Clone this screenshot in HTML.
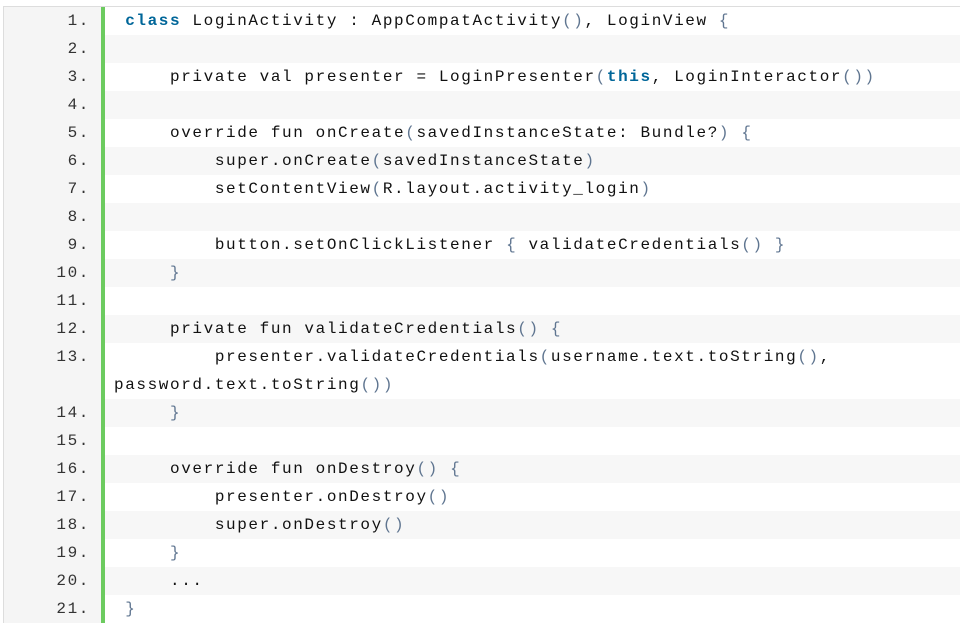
<!DOCTYPE html>
<html><head><style>
html,body{margin:0;padding:0;background:#fff;width:960px;height:623px;overflow:hidden}
.wrap{position:absolute;left:3px;top:6px;width:957px;border-top:1px solid #ddd;border-left:1px solid #ddd;background:#f5f5f5}
.row{position:relative;height:28px;font-family:"Liberation Mono","Courier New",monospace;font-size:16px;letter-spacing:1.6px;line-height:28px;color:#111;white-space:pre}
.row.tall{height:56px}
.num{position:absolute;left:0;width:86px;text-align:right;color:#333;background:#f5f5f5;height:100%}
.code{position:absolute;left:97px;right:0;height:100%;border-left:4px solid #6ccb5f;padding-left:9px;background:#fff}
.row:nth-child(even) .code{background:#f7f7f7}
.k{color:#069;font-weight:bold}
.p{color:#5f7590}
</style></head><body><div class="wrap">
<div class="row"><div class="num">1.</div><div class="code"> <span class="k">class</span> LoginActivity : AppCompatActivity<span class="p">()</span>, LoginView <span class="p">{</span></div></div>
<div class="row"><div class="num">2.</div><div class="code"></div></div>
<div class="row"><div class="num">3.</div><div class="code">     private val presenter = LoginPresenter<span class="p">(</span><span class="k">this</span>, LoginInteractor<span class="p">())</span></div></div>
<div class="row"><div class="num">4.</div><div class="code"></div></div>
<div class="row"><div class="num">5.</div><div class="code">     override fun onCreate<span class="p">(</span>savedInstanceState: Bundle?<span class="p">)</span> <span class="p">{</span></div></div>
<div class="row"><div class="num">6.</div><div class="code">         super.onCreate<span class="p">(</span>savedInstanceState<span class="p">)</span></div></div>
<div class="row"><div class="num">7.</div><div class="code">         setContentView<span class="p">(</span>R.layout.activity_login<span class="p">)</span></div></div>
<div class="row"><div class="num">8.</div><div class="code"></div></div>
<div class="row"><div class="num">9.</div><div class="code">         button.setOnClickListener <span class="p">{</span> validateCredentials<span class="p">()</span> <span class="p">}</span></div></div>
<div class="row"><div class="num">10.</div><div class="code">     <span class="p">}</span></div></div>
<div class="row"><div class="num">11.</div><div class="code"></div></div>
<div class="row"><div class="num">12.</div><div class="code">     private fun validateCredentials<span class="p">()</span> <span class="p">{</span></div></div>
<div class="row tall"><div class="num">13.</div><div class="code">         presenter.validateCredentials<span class="p">(</span>username.text.toString<span class="p">()</span>,
password.text.toString<span class="p">())</span></div></div>
<div class="row"><div class="num">14.</div><div class="code">     <span class="p">}</span></div></div>
<div class="row"><div class="num">15.</div><div class="code"></div></div>
<div class="row"><div class="num">16.</div><div class="code">     override fun onDestroy<span class="p">()</span> <span class="p">{</span></div></div>
<div class="row"><div class="num">17.</div><div class="code">         presenter.onDestroy<span class="p">()</span></div></div>
<div class="row"><div class="num">18.</div><div class="code">         super.onDestroy<span class="p">()</span></div></div>
<div class="row"><div class="num">19.</div><div class="code">     <span class="p">}</span></div></div>
<div class="row"><div class="num">20.</div><div class="code">     ...</div></div>
<div class="row"><div class="num">21.</div><div class="code"> <span class="p">}</span></div></div>
</div></body></html>
